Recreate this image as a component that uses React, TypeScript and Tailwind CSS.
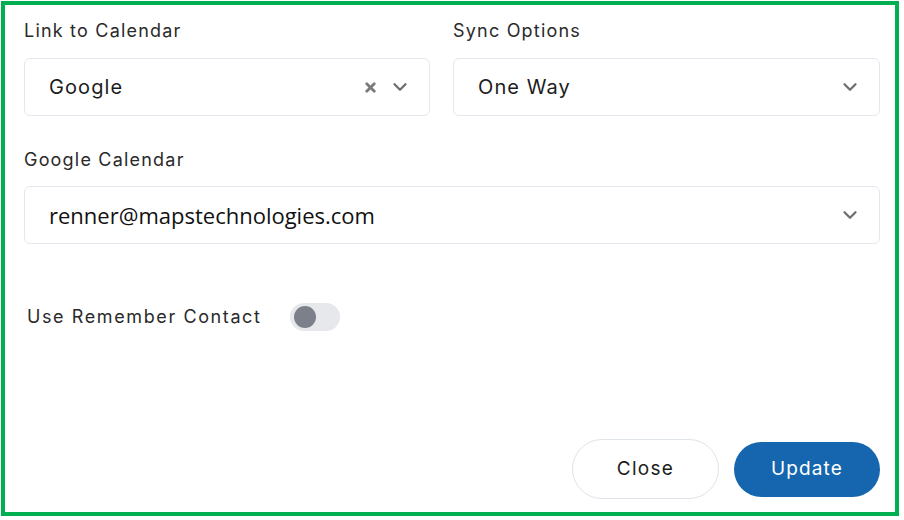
import { ChevronDown, X } from 'lucide-react';

function SelectBox({ value, clearable, email }: { value: string; clearable?: boolean; email?: boolean }) {
  return (
    <div className="h-[58px] rounded-md border border-[#e3e6ec] bg-white flex items-center pl-6 pr-[18px]">
      <span
        className={
          email
            ? "flex-1 text-[22px] text-[#111] font-['Open_Sans',sans-serif]"
            : 'flex-1 text-[20px] text-[#1c1c1c] tracking-[1.1px] -mt-[1px]'
        }
      >
        {value}
      </span>
      {clearable && <X className="w-[15px] h-[15px] text-[#7a7a7a] mr-[11px]" strokeWidth={4.5} />}
      <ChevronDown className="w-[22px] h-[22px] text-[#6e6e6e]" strokeWidth={2.5} />
    </div>
  );
}

export default function App() {
  return (
    <div className="w-[904px] h-[520px] bg-white pt-[1px] pl-[1px] font-['Inter','Noto_Sans',sans-serif]">
      <div className="w-[898px] h-[515px] border-4 border-[#00b050] pl-[19px] pr-[15px] pt-[12px] pb-[13px] flex flex-col">
        <div className="grid grid-cols-[406px_1fr] gap-x-[23px]">
          <div>
            <div className="text-[18px] leading-[28px] text-[#2a2a2a] mb-[13px] tracking-[1.2px]">Link to Calendar</div>
            <SelectBox value="Google" clearable />
          </div>
          <div>
            <div className="text-[18px] leading-[28px] text-[#2a2a2a] mb-[13px] tracking-[1.2px]">Sync Options</div>
            <SelectBox value="One Way" />
          </div>
        </div>

        <div className="mt-[30px]">
          <div className="text-[18px] leading-[28px] text-[#2a2a2a] mb-[12px] tracking-[1.2px]">Google Calendar</div>
          <SelectBox value="renner@mapstechnologies.com" email />
        </div>

        <div className="mt-[59px] flex items-center pl-[3px]">
          <span className="text-[18px] leading-[28px] text-[#2a2a2a] w-[263px] tracking-[1.6px]">Use Remember Contact</span>
          <div className="w-[50px] h-[28px] rounded-full bg-[#e6e8eb] flex items-center pl-[4px]">
            <div className="w-[22px] h-[22px] rounded-full bg-[#7b808b]" />
          </div>
        </div>

        <div className="mt-auto flex items-center justify-end gap-[15px]">
          <button className="w-[147px] h-[60px] rounded-full border border-[#dfe3ea] bg-white text-[19px] text-[#1c1c1c] tracking-[1.3px]">
            Close
          </button>
          <button className="w-[146px] h-[55px] rounded-full bg-[#1566ae] text-[19px] text-white tracking-[1.1px]">
            Update
          </button>
        </div>
      </div>
    </div>
  );
}
